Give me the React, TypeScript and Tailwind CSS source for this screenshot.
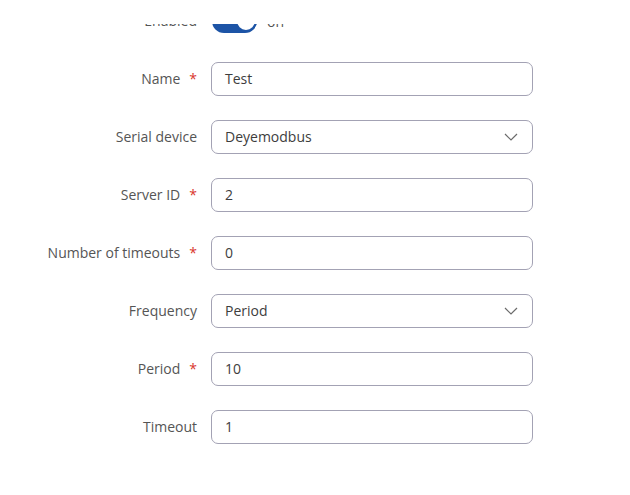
import { ReactNode } from "react";

const font = { fontFamily: '"Open Sans", "Liberation Sans", sans-serif' };

function Row({
  label,
  required,
  children,
}: {
  label: string;
  required?: boolean;
  children: ReactNode;
}) {
  return (
    <div className="flex items-center h-[34px]">
      <div className="w-[197px] shrink-0 flex justify-end items-center pb-[2px] text-[14px] text-[#555555]">
        <span>{label}</span>
        {required && <span className="ml-[9px] text-[#d9352b]">*</span>}
      </div>
      <div className="ml-[14px] w-[322px]">{children}</div>
    </div>
  );
}

function TextInput({ value }: { value: string }) {
  return (
    <div className="h-[34px] rounded-[7px] border border-[#a3a2b4] bg-white flex items-center pl-[13px] pb-[2px] text-[14px] text-[#3d3d3d]">
      {value}
    </div>
  );
}

function SelectInput({ value }: { value: string }) {
  return (
    <div className="h-[34px] rounded-[7px] border border-[#a3a2b4] bg-white flex items-center justify-between pl-[13px] pr-[14px] text-[14px] text-[#3d3d3d]">
      <span className="pb-[2px]">{value}</span>
      <svg width="14" height="8" viewBox="0 0 14 8" fill="none">
        <path d="M1 1l6 6 6-6" stroke="#6b6b6b" strokeWidth="1.2" />
      </svg>
    </div>
  );
}

export default function App() {
  return (
    <div className="relative w-[630px] h-[495px] bg-white overflow-hidden" style={font}>
      {/* sticky header covers the top of the scrolled form */}
      <div className="absolute top-0 left-0 right-0 h-[24px] bg-white z-10" />
      <div className="pt-[4px] flex flex-col gap-[24px]">
        <Row label="Enabled">
          <div className="flex items-center ml-[1px]">
            <div className="w-[45px] h-[24px] rounded-full bg-[#1d54a6] flex items-center justify-end">
              <div className="w-[22px] h-[22px] rounded-full bg-white border-[2px] border-[#1d54a6]" />
            </div>
            <span className="ml-[10px] text-[14px] text-[#555555]">on</span>
          </div>
        </Row>
        <Row label="Name" required>
          <TextInput value="Test" />
        </Row>
        <Row label="Serial device">
          <SelectInput value="Deyemodbus" />
        </Row>
        <Row label="Server ID" required>
          <TextInput value="2" />
        </Row>
        <Row label="Number of timeouts" required>
          <TextInput value="0" />
        </Row>
        <Row label="Frequency">
          <SelectInput value="Period" />
        </Row>
        <Row label="Period" required>
          <TextInput value="10" />
        </Row>
        <Row label="Timeout">
          <TextInput value="1" />
        </Row>
      </div>
    </div>
  );
}
